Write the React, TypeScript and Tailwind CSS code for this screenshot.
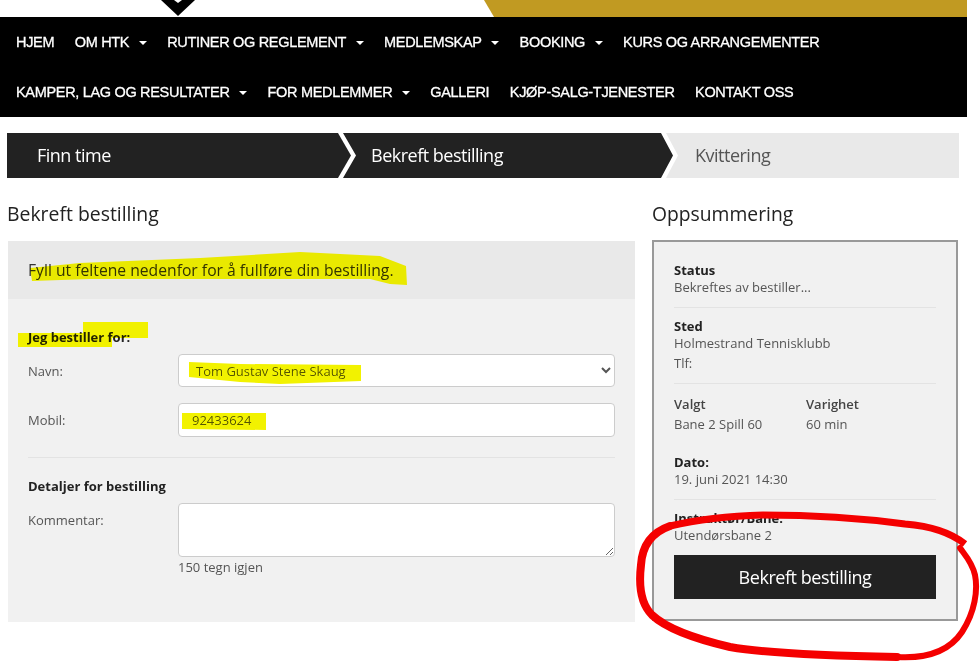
import React from "react";

const navRows = [
  { label: "HJEM" },
  { label: "OM HTK", caret: true },
  { label: "RUTINER OG REGLEMENT", caret: true },
  { label: "MEDLEMSKAP", caret: true },
  { label: "BOOKING", caret: true },
  { label: "KURS OG ARRANGEMENTER" },
  { label: "KAMPER, LAG OG RESULTATER", caret: true },
  { label: "FOR MEDLEMMER", caret: true },
  { label: "GALLERI" },
  { label: "KJØP-SALG-TJENESTER" },
  { label: "KONTAKT OSS" },
];

function Caret() {
  return <span className="ml-[9.5px] h-0 w-0 border-x-[4px] border-t-[4px] border-x-transparent border-t-white" />;
}

function Divider() {
  return <div className="h-px bg-[#e3e3e3]" />;
}

export default function App() {
  return (
    <div className="relative h-[664px] w-[980px] overflow-hidden bg-white font-['Open_Sans','Noto_Sans',sans-serif] text-[#3a3a3a]">
      {/* top strip */}
      <div className="h-[17px] w-[967px]">
        <svg width="967" height="17" viewBox="0 0 967 17" className="block">
          <polygon points="161,0 195,0 178,16" fill="#000" />
          <polygon points="174,0 182,0 178,3" fill="#fff" />
          <polygon points="484,0 967,0 967,17 494,17" fill="#c19a22" />
        </svg>
      </div>

      {/* nav */}
      <nav className="flex w-[967px] flex-wrap gap-x-[20.5px] bg-black pl-4 font-['Liberation_Sans',Arial,sans-serif] text-[14.5px] leading-none font-medium tracking-[-0.32px] text-white [-webkit-text-stroke:0.3px_white]">
        {navRows.map((n) => (
          <a key={n.label} className="flex h-[50px] items-center whitespace-nowrap pt-[1px]">
            {n.label}
            {n.caret && <Caret />}
          </a>
        ))}
      </nav>

      {/* steps */}
      <div className="mt-4 ml-[7px] flex h-[45px] text-[18px] tracking-[-0.5px]">
        <div className="flex w-[344px] items-center bg-[#222] pl-[30px] text-white [clip-path:polygon(0_0,331px_0,344px_50%,331px_100%,0_100%)]">
          Finn time
        </div>
        <div className="-ml-2 flex w-[330px] items-center bg-[#222] pl-[28px] text-white [clip-path:polygon(0_0,318px_0,330px_50%,318px_100%,0_100%,13px_50%)]">
          Bekreft bestilling
        </div>
        <div className="-ml-[7px] flex w-[293px] items-center bg-[#e9e9e9] pl-[29px] text-[#555] [clip-path:polygon(0_0,100%_0,100%_100%,0_100%,12px_50%)]">
          Kvittering
        </div>
      </div>

      {/* main */}
      <div className="mt-[22px] ml-[7px] flex items-start gap-[17px]">
        <div className="w-[628px]">
          <h2 className="h-[41px] text-[19.4px] leading-[28px] text-[#222]">Bekreft bestilling</h2>
          <div className="ml-px h-[381px] bg-[#f1f1f1]">
            <div className="flex h-[58px] items-center bg-[#e9e9e9] pt-[2px] pl-[20px] text-[15.7px] text-[#333]">
              Fyll ut feltene nedenfor for å fullføre din bestilling.
            </div>
            <div className="pt-[28px] pr-5 pl-5 text-[13px]">
              <div className="font-bold leading-5 text-[#222]">Jeg bestiller for:</div>
              <div className="mt-[7px] flex h-[33px] items-center">
                <label className="w-[150px] shrink-0 pt-[2px] text-[#555]">Navn:</label>
                <select className="h-[33px] w-[437px] shrink-0 rounded-[4px] border border-[#ccc] bg-white pl-[13px] text-[13px] text-[#555]">
                  <option>Tom Gustav Stene Skaug</option>
                </select>
              </div>
              <div className="mt-4 flex h-[34px] items-center">
                <label className="w-[150px] shrink-0 pt-[2px] text-[#555]">Mobil:</label>
                <input
                  readOnly
                  value="92433624"
                  className="h-[34px] w-[437px] shrink-0 rounded-[4px] border border-[#ccc] bg-white pl-[13px] text-[13px] text-[#555]"
                />
              </div>
              <div className="mt-5">
                <Divider />
              </div>
              <div className="mt-[18px] font-bold leading-5 text-[#222]">Detaljer for bestilling</div>
              <div className="mt-[7px] flex items-start">
                <label className="w-[150px] shrink-0 pt-2 text-[#555]">Kommentar:</label>
                <div>
                  <textarea className="block h-[54px] w-[437px] rounded-[4px] border border-[#ccc] bg-white" />
                  <div className="leading-5 text-[#555]">150 tegn igjen</div>
                </div>
              </div>
            </div>
          </div>
        </div>

        <div className="w-[306px]">
          <h2 className="h-[40px] text-[19.3px] leading-[28px] text-[#222]">Oppsummering</h2>
          <div className="h-[381px] border-2 border-[#999] bg-[#f1f1f1] px-5 pt-[20px] text-[13px] leading-[17px] text-[#555]">
            <div className="font-bold text-[#222]">Status</div>
            <div>Bekreftes av bestiller...</div>
            <div className="mt-[11px] mb-[10px]">
              <Divider />
            </div>
            <div className="font-bold text-[#222]">Sted</div>
            <div>Holmestrand Tennisklubb</div>
            <div className="mt-[3px]">Tlf:</div>
            <div className="mt-[11px] mb-[12px]">
              <Divider />
            </div>
            <div className="flex">
              <div className="w-[132px]">
                <div className="font-semibold text-[#444]">Valgt</div>
                <div className="mt-[3px]">Bane 2 Spill 60</div>
              </div>
              <div>
                <div className="font-semibold text-[#444]">Varighet</div>
                <div className="mt-[3px]">60 min</div>
              </div>
            </div>
            <div className="mt-[21px] font-bold text-[#222]">Dato:</div>
            <div>19. juni 2021 14:30</div>
            <div className="mt-[11px] mb-[10px]">
              <Divider />
            </div>
            <div className="font-bold text-[#222]">Instruktør/Bane:</div>
            <div>Utendørsbane 2</div>
            <button className="mt-[11px] flex h-[44px] w-full items-center justify-center bg-[#222] text-[18px] tracking-[-0.45px] text-white">
              Bekreft bestilling
            </button>
          </div>
        </div>
      </div>

      {/* hand-drawn markup on the screenshot */}
      <svg width="980" height="664" viewBox="0 0 980 664" className="pointer-events-none absolute top-0 left-0 mix-blend-darken">
        <path d="M30 268 L80 263 L200 258 L300 252 L380 256 L406 266 L407 285 L390 284 L370 279 L90 279 L32 281 Z" fill="#f2f200" />
        <path d="M18 333 L83 333 L83 322 L148 322 L148 338 L112 338 L112 347 L18 347 Z" fill="#f2f200" />
        <path d="M189 362 L240 364 L361 365 L361 381 L280 384 L240 382 L189 377 Z" fill="#f2f200" />
        <path d="M182 413 L266 413 L266 430 L182 429 Z" fill="#f2f200" />
      </svg>
      <svg width="980" height="664" viewBox="0 0 980 664" className="pointer-events-none absolute top-0 left-0">
        <path
          d="M965 544 C950 532 930 526 905 524 C860 518 810 515 763 515 C730 516 700 519 670 526"
          fill="none"
          stroke="#f40000"
          strokeWidth="7"
        />
        <path
          d="M670 526 C650 533 642 548 641 565 C638 590 642 605 652 615 C668 630 700 640 730 647 C770 654 840 656 897 657"
          fill="none"
          stroke="#f40000"
          strokeWidth="8"
          strokeLinecap="round"
        />
        <path
          d="M897 657 C930 659 950 650 962 632 C975 612 978 590 975 575 C972 562 965 555 960 548"
          fill="none"
          stroke="#f40000"
          strokeWidth="6"
          strokeLinecap="round"
        />
      </svg>
    </div>
  );
}
